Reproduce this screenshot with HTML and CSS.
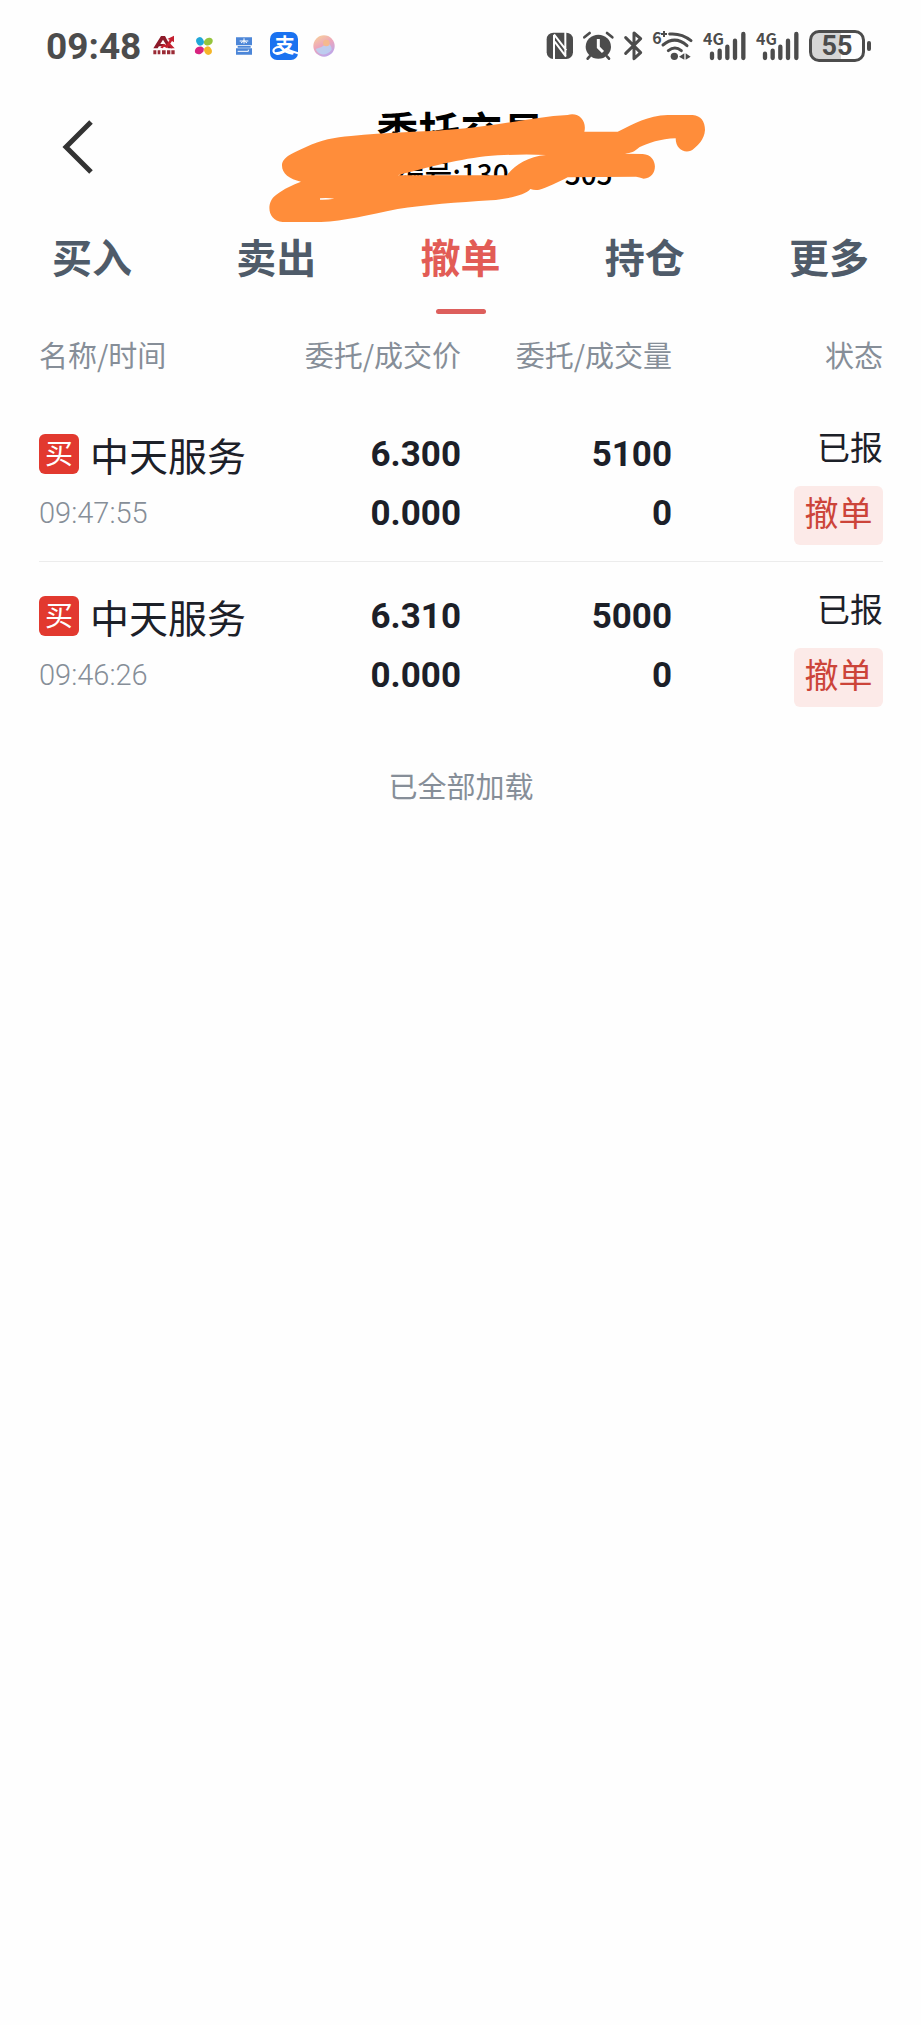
FILE: index.html
```html
<!DOCTYPE html>
<html lang="zh-CN">
<head>
    <meta charset="UTF-8">
    <meta name="viewport" content="width=device-width, initial-scale=1.0">
    <title>委托交易</title>
    <link rel="stylesheet" href="styles.css">
</head>
<body>
    <!-- 状态栏 -->
    <div class="status-bar">
        <div class="status-left">
            <span class="clock">09:48</span>
            <span class="app-icon">
                <svg width="22" height="22" viewBox="0 0 66 66">
                    <path d="M1 40 L24 3 H36 L46 22 L58 40 H46 L30 14 L14 40 Z M16 27 H34 V34 H12 Z" fill="#8d1b2a"/>
                    <path d="M22 38 L32 26 L40 30 L50 14 L43 12 L63 2 V22 L57 18 L43 40 L33 35 L29 40 Z M52 26 L65 40 H54 L47 31 Z" fill="#c4202f"/>
                    <path d="M1 46 H10 V58 H1 Z M14 46 H22 V58 H14 Z M27 46 H38 V58 H27 Z M42 46 H52 V58 H42 Z M55 46 H65 V58 H55 Z" fill="#9a2a35"/>
                </svg>
            </span>
            <span class="app-icon">
                <svg width="20" height="20" viewBox="0 0 60 60">
                    <ellipse cx="18" cy="16" rx="11" ry="13" fill="#20a7d8" transform="rotate(-25 18 16)"/>
                    <ellipse cx="43" cy="17" rx="14" ry="11" fill="#95c43d" transform="rotate(-30 43 17)"/>
                    <ellipse cx="16" cy="43" rx="14" ry="11" fill="#d8237f" transform="rotate(-25 16 43)"/>
                    <ellipse cx="42" cy="44" rx="11" ry="13" fill="#f5b528" transform="rotate(-25 42 44)"/>
                </svg>
            </span>
            <span class="app-icon">
                <svg width="18" height="18" viewBox="0 0 54 54">
                    <path d="M3 1 H51 V25 H3 Z M8 27 H47 V32 H8 Z M3 34 H51 V53 H3 Z" fill="#4c86d8"/>
                    <path d="M14 12 H40 M27 4 V20 M18 18 L27 11 L36 18 M8 43 H40 V38" fill="none" stroke="#fff" stroke-width="3"/>
                </svg>
            </span>
            <span class="app-icon">
                <svg width="28" height="28" viewBox="0 0 84 84">
                    <rect width="84" height="84" rx="21" fill="#1a72f0"/>
                    <text x="14" y="62" class="alipay-label" font-size="60">支</text>
                    <path d="M34 46 C18 42 6 52 12 61 C20 70 38 64 50 50 M48 50 Q62 58 84 64" fill="none" stroke="#fff" stroke-width="6"/>
                </svg>
            </span>
            <span class="app-icon">
                <svg width="22" height="22" viewBox="0 0 66 66">
                    <defs>
                        <linearGradient id="orb" x1="0.2" y1="0" x2="0.7" y2="1">
                            <stop offset="0" stop-color="#f8cf9c"/>
                            <stop offset="0.45" stop-color="#eda6bb"/>
                            <stop offset="1" stop-color="#b9a6ee"/>
                        </linearGradient>
                    </defs>
                    <circle cx="33" cy="33" r="32" fill="url(#orb)"/>
                    <path d="M8 42 Q30 36 44 24 Q56 30 56 44 Q44 60 26 58 Q12 54 8 42 Z" fill="#b8d6f5" opacity="0.8"/>
                    <circle cx="40" cy="24" r="10" fill="#f5b98e"/>
                </svg>
            </span>
        </div>
        <div class="status-right">
            <!-- NFC -->
            <svg width="27" height="32" viewBox="50 45 81 96">
                <rect x="52" y="53" width="79" height="79" rx="20" fill="#4c4c4c"/>
                <path d="M74 60 V134 M108 51 V122 M74 58 L111 106 M76 80 L110 125" fill="none" stroke="#fff" stroke-width="6"/>
            </svg>
            <!-- 闹钟 -->
            <svg width="31" height="32" viewBox="164 45 93 96">
                <ellipse cx="210" cy="95" rx="38" ry="36" fill="#4c4c4c"/>
                <path d="M168 67 L184 54 M252 67 L236 54 M184 124 L178 131 M236 124 L242 131" stroke="#4c4c4c" stroke-width="8" stroke-linecap="round"/>
                <path d="M210 72 V97 L224 111" fill="none" stroke="#fff" stroke-width="9"/>
            </svg>
            <!-- 蓝牙 -->
            <svg width="19" height="32" viewBox="288 45 57 96">
                <path d="M293 68 L338 113 L318 131 V54 L338 71 L293 115" fill="none" stroke="#4c4c4c" stroke-width="9" stroke-linecap="round" stroke-linejoin="round"/>
            </svg>
            <!-- Wi-Fi 6 -->
            <svg width="40" height="32" viewBox="372 45 120 96">
                <text x="370" y="86" class="net-label" font-size="48">6</text>
                <path d="M396 57 H414 M405 48 V66" stroke="#4c4c4c" stroke-width="6"/>
                <path d="M422 57 Q458 54 486 77 M402 90 Q438 60 474 92 M418 107 Q438 91 457 107" fill="none" stroke="#4c4c4c" stroke-width="9" stroke-linecap="round"/>
                <circle cx="436" cy="124" r="11" fill="#4c4c4c"/>
                <path d="M466 115 V134 L450 125 Z M470 115 V134 L485 125 Z" fill="#4c4c4c"/>
            </svg>
            <!-- 信号 -->
            <svg width="43" height="32" viewBox="516 45 129 96">
                <text x="516" y="90" class="net-label" font-size="48">4G</text>
                <path d="M543 116 V129 M566 107 V129 M589 95 V129 M612 77 V129 M637 57 V129" stroke="#4c4c4c" stroke-width="13" stroke-linecap="round"/>
            </svg>
            <svg width="43" height="32" viewBox="516 45 129 96">
                <text x="516" y="90" class="net-label" font-size="48">4G</text>
                <path d="M543 116 V129 M566 107 V129 M589 95 V129 M612 77 V129 M637 57 V129" stroke="#4c4c4c" stroke-width="13" stroke-linecap="round"/>
            </svg>
            <span class="battery"><span class="battery-body">55</span><span class="battery-tip"></span></span>
        </div>
    </div>

    <!-- 标题栏 -->
    <div class="header">
        <button class="back-button" aria-label="返回">
            <svg width="30" height="54" viewBox="0 0 30 54">
                <path d="M28 2 L3 27 L28 52" fill="none" stroke="#333" stroke-width="5"/>
            </svg>
        </button>
        <div class="title-box">
            <h1>委托交易</h1>
            <p class="account"><span>编号:130</span><span>505</span></p>
        </div>
        <svg class="scribble" width="520" height="140" viewBox="-150 0 1560 420">
            <path fill="#ff8d3a" fill-rule="evenodd" d="M93 212 C93 185 130 172 165 156 C210 135 250 127 300 123 C400 111 520 112 620 102 C740 93 850 65 950 60 C985 50 1008 80 1000 110 L1100 110 C1150 86 1190 62 1250 60 L1325 60 C1350 62 1362 80 1362 105 C1360 135 1340 150 1330 160 C1310 180 1274 168 1274 130 C1230 131 1190 145 1165 157 C1150 171 1140 174 1122 176 L1175 177 C1225 180 1222 250 1178 251 Q1165 246 1155 245 L950 247 C920 262 890 278 865 284 Q850 286 838 282 C825 300 770 312 720 316 C620 322 520 330 440 342 C350 360 280 378 210 381 L95 381 C47 378 45 320 75 300 C100 280 125 270 150 260 C115 252 93 235 93 212 Z M440 241 C560 210 640 188 740 181 Q820 177 885 180 C830 185 790 210 768 241 Z M207 310 Q230 308 250 311 Q225 315 207 314 Z"/>
        </svg>
    </div>

    <!-- 选项卡 -->
    <div class="tabs">
        <button>买入</button>
        <button>卖出</button>
        <button class="active">撤单</button>
        <button>持仓</button>
        <button>更多</button>
    </div>

    <!-- 委托列表 -->
    <div class="container">
        <table class="orders">
            <thead>
                <tr>
                    <th>名称/时间</th>
                    <th>委托/成交价</th>
                    <th>委托/成交量</th>
                    <th>状态</th>
                </tr>
            </thead>
            <tbody>
                <tr>
                    <td>
                        <div class="name"><span class="buy-tag">买</span>中天服务</div>
                        <div class="time">09:47:55</div>
                    </td>
                    <td class="num">6.300<br>0.000</td>
                    <td class="num">5100<br>0</td>
                    <td>
                        <div class="state">已报</div>
                        <button class="cancel-btn">撤单</button>
                    </td>
                </tr>
                <tr>
                    <td>
                        <div class="name"><span class="buy-tag">买</span>中天服务</div>
                        <div class="time">09:46:26</div>
                    </td>
                    <td class="num">6.310<br>0.000</td>
                    <td class="num">5000<br>0</td>
                    <td>
                        <div class="state">已报</div>
                        <button class="cancel-btn">撤单</button>
                    </td>
                </tr>
            </tbody>
        </table>
        <p class="load-end">已全部加载</p>
    </div>

    <script>
        const tabs = document.querySelectorAll(".tabs button");
        tabs.forEach((tab) => {
            tab.addEventListener("click", () => {
                tabs.forEach((t) => t.classList.toggle("active", t === tab));
            });
        });
    </script>
</body>
</html>
```
FILE: styles.css
```css
/* 基础样式 */
body {
    font-family: "Noto Sans CJK SC", sans-serif;
    background-color: #fefefe;
    color: #1c2028;
    margin: 0;
    min-height: 100vh;
}

button {
    font-family: inherit;
    border: none;
    background: none;
    padding: 0;
    cursor: pointer;
}

svg {
    display: block;
    overflow: visible;
}

/* 状态栏 */
.status-bar {
    display: flex;
    justify-content: space-between;
    align-items: center;
    height: 92px;
    padding: 0 50px 0 46px;
    color: #4c4c4c;
    font-family: Roboto, sans-serif;
    font-weight: bold;
}

.status-left,
.status-right {
    display: flex;
    align-items: center;
}

.status-right {
    gap: 10px;
}

.clock {
    width: 98px;
    font-size: 37px;
}

.app-icon {
    display: flex;
    justify-content: center;
    width: 40px;
}

.alipay-label {
    font-family: "Noto Sans CJK SC", sans-serif;
    font-weight: bold;
    fill: white;
}

.net-label {
    font-family: "Noto Sans CJK SC", sans-serif;
    font-weight: bold;
    fill: #4c4c4c;
}

.battery {
    display: flex;
    align-items: center;
    gap: 2px;
}

.battery-body {
    box-sizing: border-box;
    width: 56px;
    height: 32px;
    border: 3px solid #4c4c4c;
    border-radius: 10px;
    background: linear-gradient(to right, #d6d6d6 58%, #fefefe 58%);
    font-size: 27px;
    line-height: 27px;
    text-align: center;
}

.battery-tip {
    width: 4px;
    height: 10px;
    border-radius: 2px;
    background-color: #4c4c4c;
}

/* 标题栏 */
.header {
    position: relative;
    display: flex;
    align-items: center;
    justify-content: center;
    height: 110px;
}

.back-button {
    position: absolute;
    left: 63px;
}

.title-box {
    color: #000;
}

.title-box h1 {
    margin: 0;
    font-size: 42px;
    line-height: 52px;
    text-align: center;
}

.account {
    display: flex;
    gap: 56px;
    margin: 0;
    padding-left: 88px;
    font-size: 28px;
    line-height: 34px;
    font-weight: 500;
}

/* 涂抹遮挡 */
.scribble {
    position: absolute;
    top: 3px;
    left: 50%;
    transform: translateX(-50%);
}

/* 选项卡 */
.tabs {
    display: flex;
}

.tabs button {
    position: relative;
    flex: 1;
    height: 112px;
    padding-bottom: 4px;
    font-size: 40px;
    font-weight: bold;
    color: #4f5b69;
}

.tabs button.active {
    color: #e25c56;
}

.tabs button.active::after {
    content: "";
    position: absolute;
    bottom: 0;
    left: 50%;
    width: 50px;
    height: 5px;
    border-radius: 3px;
    background-color: #dd5f5c;
    transform: translateX(-50%);
}

/* 委托列表 */
.container {
    padding: 0 38px 0 39px;
}

.orders {
    width: 100%;
    table-layout: fixed;
    border-collapse: collapse;
}

.orders th {
    padding: 19px 0 25px;
    font-size: 29px;
    line-height: 42px;
    font-weight: normal;
    color: #868e98;
    text-align: right;
    white-space: nowrap;
}

.orders td {
    padding: 24px 0 16px;
    vertical-align: top;
    text-align: right;
}

.orders th:first-child,
.orders td:first-child {
    text-align: left;
}

.orders tbody tr {
    border-bottom: 1px solid #ececec;
}

.orders tbody tr:last-child {
    border-bottom: none;
}

.name {
    display: flex;
    align-items: center;
    gap: 11px;
    height: 62px;
    font-size: 39px;
    line-height: 58px;
    white-space: nowrap;
}

.buy-tag {
    width: 40px;
    height: 40px;
    border-radius: 6px;
    background-color: #e2392f;
    color: white;
    font-size: 28px;
    line-height: 36px;
    text-align: center;
}

.name,
.state {
    margin-top: -1px;
}

.time {
    font-family: Roboto, sans-serif;
    font-size: 29px;
    font-weight: 300;
    line-height: 56px;
    color: #868e98;
}

.orders .num {
    padding-top: 25px;
    padding-bottom: 15px;
    font-family: Roboto, sans-serif;
    font-size: 35px;
    font-weight: bold;
    line-height: 59px;
}

.state {
    margin-bottom: 17px;
    font-size: 33px;
    line-height: 46px;
}

.cancel-btn {
    display: block;
    width: 89px;
    height: 59px;
    margin-left: auto;
    padding-bottom: 8px;
    border-radius: 6px;
    background-color: #fceae8;
    color: #cc4439;
    font-size: 34px;
    line-height: 50px;
}

.load-end {
    margin: 40px 0 0;
    font-size: 29px;
    line-height: 44px;
    color: #868e98;
    text-align: center;
}
```
